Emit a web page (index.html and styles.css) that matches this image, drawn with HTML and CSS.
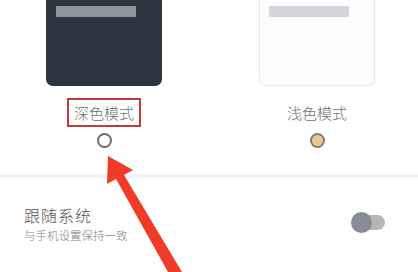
FILE: index.html
```html
<!DOCTYPE html>
<html lang="zh-CN">
<head>
<meta charset="utf-8">
<title>深色模式</title>
<link rel="stylesheet" href="styles.css">
</head>
<body>
<div class="page">
  <section class="modes">
    <div class="mode">
      <div class="card card-dark"><div class="bar"></div></div>
      <div class="label label-marked">深色模式</div>
      <div class="radio"></div>
    </div>
    <div class="mode">
      <div class="card card-light"><div class="bar"></div></div>
      <div class="label">浅色模式</div>
      <div class="radio radio-on"></div>
    </div>
  </section>
  <div class="divider"></div>
  <section class="follow">
    <div class="follow-text">
      <div class="follow-title">跟随系统</div>
      <div class="follow-sub">与手机设置保持一致</div>
    </div>
    <div class="switch">
      <div class="knob"></div>
      <div class="track"></div>
    </div>
  </section>
  <svg class="arrow" width="418" height="272" viewBox="0 0 418 272">
    <polygon points="108,156 133,170 124,175 182,272 168,272 116,179 107,184" fill="#f03c26"/>
  </svg>
</div>
</body>
</html>
```
FILE: styles.css
```css
html, body {
  margin: 0;
  padding: 0;
  background: #ffffff;
}
body {
  font-family: "Noto Sans CJK SC", "Noto Sans", sans-serif;
}
.page {
  position: relative;
  width: 418px;
  height: 272px;
  overflow: hidden;
}
.modes {
  display: flex;
  gap: 97px;
  padding-left: 46px;
}
.mode {
  width: 116px;
  display: flex;
  flex-direction: column;
  align-items: center;
}
.card {
  box-sizing: border-box;
  width: 116px;
  height: 86px;
  border-radius: 0 0 7px 7px;
  padding: 6px 0 0 10px;
}
.card-dark {
  background: #2f3441;
}
.card-dark .bar {
  background: #8e949c;
}
.card-light {
  background: #fdfdfd;
  border: 1px solid #e8e8e8;
  border-top: none;
  padding-left: 9px;
}
.card-light .bar {
  background: #d3d6da;
}
.bar {
  width: 80px;
  height: 11px;
}
.label {
  margin-top: 12px;
  border: 2px solid transparent;
  padding: 0 5px;
  font-size: 15px;
  line-height: 25px;
  font-weight: 300;
  color: #707070;
}
.label-marked {
  border-color: #c6393f;
}
.radio {
  box-sizing: border-box;
  width: 15px;
  height: 15px;
  margin-top: 6px;
  border: 2px solid #6e6e6e;
  border-radius: 50%;
  background: #ffffff;
}
.radio-on {
  border-color: #8a7b68;
  background: #e9c997;
}
.divider {
  margin-top: 26px;
  height: 4px;
  background: #f3f3f3;
}
.follow {
  display: flex;
  align-items: center;
  justify-content: space-between;
  padding: 27px 33px 0 24px;
}
.follow-title {
  font-size: 16px;
  line-height: 20px;
  letter-spacing: 1px;
  font-weight: 300;
  color: #555555;
}
.follow-sub {
  margin-top: 2px;
  font-size: 11.5px;
  line-height: 16px;
  font-weight: 300;
  color: #858585;
}
.switch {
  display: flex;
  align-items: center;
  margin-top: -4px;
}
.knob {
  position: relative;
  z-index: 1;
  width: 21px;
  height: 21px;
  border-radius: 50%;
  background: #898d93;
}
.track {
  width: 21px;
  height: 15px;
  margin-left: -8px;
  border-radius: 0 8px 8px 0;
  background: #b3b8b6;
}
.arrow {
  position: absolute;
  left: 0;
  top: 0;
}
```
